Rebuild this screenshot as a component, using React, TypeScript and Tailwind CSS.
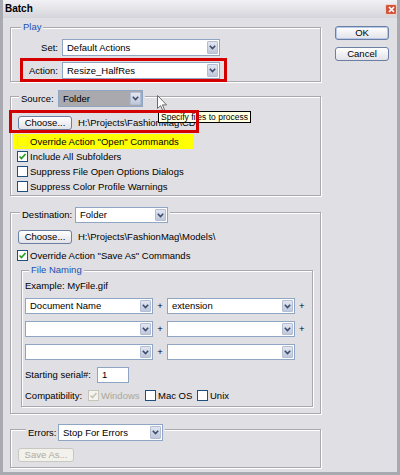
function Chevron() {
  return (
    <svg width="7" height="5" viewBox="0 0 7 5">
      <path d="M0.8 0.8 L3.5 3.6 L6.2 0.8" fill="none" stroke="#3c4b6e" strokeWidth="1.6" />
    </svg>
  );
}

function Combo({ className, value = "", field = "bg-white" }: { className: string; value?: string; field?: string }) {
  return (
    <div className={`flex border border-[#8fa5c4] ${field} ${className}`}>
      <span className="flex-1 px-[4px] flex items-center whitespace-nowrap overflow-hidden">{value}</span>
      <span className="w-[11px] m-[1px] flex items-center justify-center rounded-[1px] border border-[#b3bdd3] bg-gradient-to-b from-[#e2e6f0] to-[#bfc7da]">
        <Chevron />
      </span>
    </div>
  );
}

function Btn({ className, label, off = false, def = false }: { className: string; label: string; off?: boolean; def?: boolean }) {
  return (
    <div
      className={`flex items-center justify-center rounded-[3px] border ${
        off
          ? "border-[#c9c8c0] bg-[#f2f1ec] text-[#aeac9f]"
          : "border-[#6b7fa3] bg-gradient-to-b from-white to-[#e2e2e8]"
      } ${def ? "shadow-[inset_0_0_0_1px_#b6c9ec]" : ""} ${className}`}
    >
      {label}
    </div>
  );
}

function Check({ on = false, off = false, faint = false }: { on?: boolean; off?: boolean; faint?: boolean }) {
  const box = faint
    ? "border-[#ecec5a] bg-transparent"
    : off
    ? "border-[#c8c6b8] bg-[#f3f3ef]"
    : "border-[#1f4f7d] bg-white";
  return (
    <span className={`w-[11px] h-[11px] border flex items-center justify-center shrink-0 ${box}`}>
      {on && (
        <svg width="9" height="9" viewBox="0 0 9 9">
          <path d="M1.5 4.5 L3.5 6.5 L7.5 2" fill="none" stroke={off ? "#c6c4b6" : "#22a022"} strokeWidth="1.7" />
        </svg>
      )}
    </span>
  );
}

const group = "border border-[#a9a8ae] shadow-[1px_1px_0_#fff,inset_1px_1px_0_#fff] flex flex-col";

export default function App() {
  return (
    <div className="relative w-[400px] h-[475px] bg-[#e0dfe3] border-x-[3px] border-b-[3px] border-[#a9a9b1] text-[9.5px] leading-[12px] text-black font-['Liberation_Sans',Arial,sans-serif] overflow-hidden flex flex-col">
      {/* title bar */}
      <div className="h-[18px] -mx-[3px] flex items-center justify-between pl-[5px] pr-[3px] bg-gradient-to-b from-[#f2f2f5] to-[#d4d4db]">
        <span className="font-bold text-[10px]">Batch</span>
        <span className="w-[12px] h-[11px] rounded-[2px] border border-[#f3d2c8] bg-[#d0553a] flex items-center justify-center">
          <svg width="7" height="7" viewBox="0 0 7 7">
            <path d="M1 1 L6 6 M6 1 L1 6" stroke="#fff" strokeWidth="1.6" />
          </svg>
        </span>
      </div>

      <div className="flex flex-1">
        <div className="w-[311px] ml-[7px] flex flex-col">
          {/* Play */}
          <div className={`${group} mt-[9px] pb-[2px]`}>
            <div className="-mt-[7px] ml-[10px] px-[2px] self-start bg-[#e0dfe3] text-[#2150b3]">Play</div>
            <div className="flex items-center mt-[6px] h-[17px]">
              <span className="w-[47px] text-right">Set:</span>
              <Combo className="ml-[4px] w-[158px] h-[17px]" value="Default Actions" />
            </div>
            <div className="flex items-center mt-[6px] h-[17px]">
              <span className="w-[47px] text-right">Action:</span>
              <Combo className="ml-[4px] w-[158px] h-[17px]" value="Resize_HalfRes" />
            </div>
          </div>

          {/* Source */}
          <div className={`${group} mt-[14px] pb-[1px]`}>
            <div className="-mt-[7px] ml-[8px] px-[2px] self-start flex items-center h-[17px] bg-[#e0dfe3]">
              <span className="w-[37px]">Source:</span>
              <Combo className="w-[85px] h-[17px]" value="Folder" field="bg-[#a9a9ae]" />
            </div>
            <div className="flex items-center mt-[9px] h-[14px] ml-[7px]">
              <Btn className="w-[54px] h-[14px]" label="Choose..." />
              <span className="ml-[6px] whitespace-nowrap">H:\Projects\FashionMag\CD</span>
            </div>
            <div className="mt-[4px] flex flex-col">
              <div className="flex items-center h-[15px] ml-[2px] w-[180px] pl-[4px] bg-[#ffff00]">
                <Check faint />
                <span className="ml-[2px]">Override Action "Open" Commands</span>
              </div>
              <div className="flex items-center h-[15px] ml-[6px]">
                <Check on />
                <span className="ml-[2px]">Include All Subfolders</span>
              </div>
              <div className="flex items-center h-[15px] ml-[6px]">
                <Check />
                <span className="ml-[2px]">Suppress File Open Options Dialogs</span>
              </div>
              <div className="flex items-center h-[15px] ml-[6px]">
                <Check />
                <span className="ml-[2px]">Suppress Color Profile Warnings</span>
              </div>
            </div>
          </div>

          {/* Destination */}
          <div className={`${group} mt-[16px] pb-[6px]`}>
            <div className="-mt-[6px] ml-[9px] px-[2px] self-start flex items-center h-[16px] bg-[#e0dfe3]">
              <span className="w-[53px]">Destination:</span>
              <Combo className="w-[93px] h-[16px]" value="Folder" />
            </div>
            <div className="flex items-center mt-[7px] h-[14px] ml-[7px]">
              <Btn className="w-[54px] h-[14px]" label="Choose..." />
              <span className="ml-[6px] whitespace-nowrap">H:\Projects\FashionMag\Models\</span>
            </div>
            <div className="flex items-center h-[15px] mt-[4px] ml-[6px]">
              <Check on />
              <span className="ml-[2px]">Override Action "Save As" Commands</span>
            </div>

            {/* File Naming */}
            <div className={`${group} mt-[7px] ml-[10px] mr-[7px] pb-[3px] pl-[3px]`}>
              <div className="-mt-[7px] ml-[4px] px-[2px] self-start bg-[#e0dfe3] text-[#2150b3]">File Naming</div>
              <div className="mt-[4px]">Example: MyFile.gif</div>
              <div className="mt-[6px] flex flex-col gap-[7px]">
                {[
                  ["Document Name", "extension", true],
                  ["", "", true],
                  ["", "", false],
                ].map(([a, b, plus], i) => (
                  <div key={i} className="flex items-center h-[16px]">
                    <Combo className="w-[128px] h-[16px]" value={a as string} />
                    <span className="w-[14px] text-center">+</span>
                    <Combo className="w-[128px] h-[16px]" value={b as string} />
                    {plus && <span className="ml-[4px]">+</span>}
                  </div>
                ))}
              </div>
              <div className="flex items-center mt-[7px] h-[16px]">
                <span className="w-[72px]">Starting serial#:</span>
                <span className="w-[32px] h-[16px] border border-[#8fa5c4] bg-white px-[4px] flex items-center">1</span>
              </div>
              <div className="flex items-center mt-[5px] h-[15px]">
                <span className="w-[63px]">Compatibility:</span>
                <span className="w-[57px] flex items-center">
                  <Check on off />
                  <span className="ml-[2px] text-[#aca899]">Windows</span>
                </span>
                <span className="w-[52px] flex items-center">
                  <Check />
                  <span className="ml-[2px]">Mac OS</span>
                </span>
                <span className="flex items-center">
                  <Check />
                  <span className="ml-[2px]">Unix</span>
                </span>
              </div>
            </div>
          </div>

          {/* Errors */}
          <div className={`${group} mt-[15px] pb-[5px]`}>
            <div className="-mt-[6px] ml-[15px] px-[2px] self-start flex items-center h-[17px] bg-[#e0dfe3]">
              <span className="w-[30px]">Errors:</span>
              <Combo className="w-[105px] h-[17px]" value="Stop For Errors" />
            </div>
            <div className="flex items-center mt-[7px] h-[14px] ml-[7px]">
              <Btn className="w-[56px] h-[14px]" label="Save As..." off />
            </div>
          </div>
        </div>

        <div className="ml-[14px] mt-[8px] w-[54px] flex flex-col gap-[7px]">
          <Btn className="w-[54px] h-[14px]" label="OK" def />
          <Btn className="w-[54px] h-[14px]" label="Cancel" />
        </div>
      </div>

      {/* tooltip + cursor + red annotation boxes */}
      <div className="absolute left-[155px] top-[111px] h-[12px] px-[2px] border border-black bg-[#ffffe1] text-[8.5px] leading-[10px] whitespace-nowrap">
        Specify files to process
      </div>
      <svg className="absolute left-[154px] top-[95px]" width="11" height="17" viewBox="0 0 11 17">
        <path d="M0.5 0.5 L0.5 13.5 L3.6 10.6 L5.8 15.6 L7.6 14.8 L5.4 9.9 L9.6 9.9 Z" fill="#fff" stroke="#6b6b6b" strokeWidth="1" />
      </svg>
      <div className="absolute left-[17px] top-[58px] w-[207px] h-[24px] border-[3px] border-[#d40000]" />
      <div className="absolute left-[6px] top-[110px] w-[190px] h-[23px] border-[3px] border-[#d40000]" />
    </div>
  );
}
